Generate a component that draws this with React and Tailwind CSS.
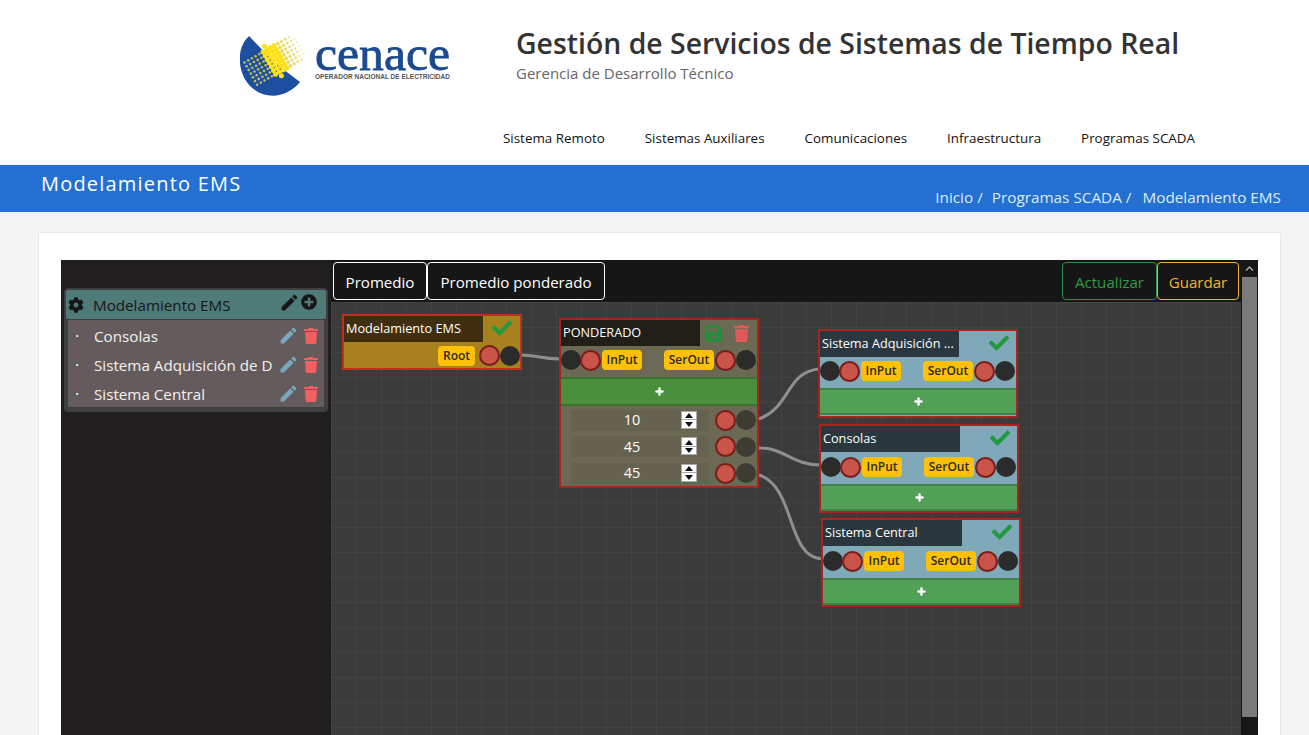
import React from "react";
import { FaCheck, FaChevronUp, FaCog, FaPlus, FaPlusCircle, FaSave, FaTrash } from "react-icons/fa";
import { MdEdit } from "react-icons/md";

const NAV = ["Sistema Remoto", "Sistemas Auxiliares", "Comunicaciones", "Infraestructura", "Programas SCADA"];
const ITEMS = ["Consolas", "Sistema Adquisición de Datos", "Sistema Central"];

const Logo = () => {
  const dots = [];
  for (let u = -6; u < 8; u++) {
    for (let v = -4; v < 5; v++) {
      const x = 33 + u * 3.7 + v * 2.1;
      const y = 27 - u * 2.1 + v * 3.7;
      const edge = Math.abs(v) > 3 - Math.abs(u) * 0.15 + 1;
      if (edge) continue;
      if (u < -1) {
        dots.push(<circle key={`${u}-${v}`} cx={x} cy={y} r={1.3} fill="#c9bf50" />);
      } else if (u < 3) {
        dots.push(<circle key={`${u}-${v}`} cx={x} cy={y} r={2.5} fill="#ffe11a" />);
      } else {
        dots.push(<circle key={`${u}-${v}`} cx={x} cy={y} r={Math.max(0.7, 1.9 - (u - 3) * 0.3)} fill="#ecd95e" />);
      }
    }
  }
  return (
    <svg width="214" height="80" viewBox="0 -12 214 80" className="shrink-0">
      <path d="M9 2 C -4 14, -3 38, 10 52 C 24 66, 46 65, 60 48 L35 29 Z" fill="#1c4f9f" />
      {dots}
      <text x="75" y="36" fontFamily="Liberation Serif, serif" fontWeight="400" fontSize="48" fill="#1c4a8f" stroke="#1c4a8f" strokeWidth="0.8" textLength="135" lengthAdjust="spacingAndGlyphs">cenace</text>
      <text x="75" y="45" fontFamily="Liberation Sans, sans-serif" fontWeight="700" fontSize="7.2" fill="#555" textLength="135" lengthAdjust="spacingAndGlyphs">OPERADOR NACIONAL DE ELECTRICIDAD</text>
    </svg>
  );
};

const Port = ({ red, dark = "bg-[#2b2b2b]", className = "" }) =>
  red ? (
    <span className={`h-[21px] w-[21px] shrink-0 rounded-full border-2 border-[#7a1c18] bg-[#c9544a] ${className}`} />
  ) : (
    <span className={`h-5 w-5 shrink-0 rounded-full ${dark} ${className}`} />
  );

const Badge = ({ children, className = "" }) => (
  <span className={`flex h-5 shrink-0 items-center justify-center rounded-[4px] bg-[#ffc107] text-[12px] font-semibold text-[#2b2b2b] ${className}`}>
    {children}
  </span>
);

const Ports = () => (
  <div className="flex h-[24px] items-center">
    <Port />
    <Port red className="-ml-[1px]" />
    <Badge className="ml-[1px] w-10">InPut</Badge>
    <Badge className="ml-[22px] w-[50px]">SerOut</Badge>
    <Port red className="ml-[1px]" />
    <Port />
  </div>
);

const AddButton = ({ className }) => (
  <div className={`flex items-center justify-center border-y-2 border-black/20 text-white ${className}`}>
    <FaPlus size={9} stroke="currentColor" strokeWidth={40} />
  </div>
);

const Node = ({ x, y, title, rowClass = "mt-[3px]" }) => (
  <div className="absolute h-[89px] w-[200px] border-2 border-[#a9231f] bg-[#7fa8b8]" style={{ left: x, top: y }}>
    <div className="flex h-[26px] items-center justify-between">
      <div className="flex h-full w-[139px] items-center bg-[#2a373e] pl-[2px] text-[12.7px] text-white">{title}</div>
      <FaCheck size={20} className="mb-[3px] mr-[7px] text-[#20993f]" />
    </div>
    <div className={rowClass}><Ports /></div>
    <AddButton className="mt-[5px] h-[27px] bg-[#52a058]" />
  </div>
);

const Spinner = () => (
  <span className="absolute left-[110px] top-[1px] flex h-[18px] w-[16px] flex-col border border-[#aaa] bg-white">
    <span className="flex flex-1 items-center justify-center border-b border-[#aaa]">
      <svg width="8" height="5" viewBox="0 0 8 5"><path d="M4 0 L8 5 L0 5 Z" fill="#111" /></svg>
    </span>
    <span className="flex flex-1 items-center justify-center">
      <svg width="8" height="5" viewBox="0 0 8 5"><path d="M0 0 L8 0 L4 5 Z" fill="#111" /></svg>
    </span>
  </span>
);

const ValueRow = ({ value }) => (
  <div className="flex h-[26.5px] items-center">
    <div className="relative ml-[10px] flex h-[21px] w-[138px] items-center justify-center bg-[#656350] pr-[16px] text-[14.5px] text-white">
      {value}
      <Spinner />
    </div>
    <span className="ml-[6px] flex items-center">
      <Port red />
      <Port dark="bg-[#3d3c33]" />
    </span>
  </div>
);

const SidebarRow = ({ label }) => (
  <div className="flex h-[29px] items-center pl-[7px]">
    <span className="w-[19px] shrink-0 text-white">·</span>
    <span className="w-[179px] shrink-0 overflow-hidden whitespace-nowrap pt-[2px] text-[15.2px] text-[#f4f0ee]">{label}</span>
    <MdEdit size={21} className="ml-[5px] shrink-0 text-[#7ba6c0]" />
    <FaTrash size={16} className="ml-[4px] shrink-0 text-[#f25f5f]" />
  </div>
);

const Wires = () => (
  <svg className="absolute left-0 top-0" width="910" height="433" fill="none" stroke="#8f8f8f" strokeWidth="3">
    <path d="M190 53 C 205 53, 210 57, 229 57" />
    <path d="M428 117 C 460 105, 455 70, 488 67" />
    <path d="M428 146 C 455 146, 460 163, 490 163" />
    <path d="M428 173 C 465 185, 455 255, 491 257" />
  </svg>
);

export default function App() {
  return (
    <div className="flex h-screen flex-col overflow-hidden bg-[#f4f4f4] font-['Open_Sans',sans-serif] text-[#2f2f2f]">
      <header className="h-[165px] shrink-0 bg-white">
        <div className="flex h-[70px] pl-[240px] pt-[26px]">
          <div className="-mt-[4px]"><Logo /></div>
          <div className="ml-[62px]">
            <h1 className="text-[28.4px] font-semibold leading-[34px] text-[#333]">Gestión de Servicios de Sistemas de Tiempo Real</h1>
            <p className="mt-[2px] text-[15px] text-[#666]">Gerencia de Desarrollo Técnico</p>
          </div>
        </div>
        <nav className="mt-[58px] flex justify-end gap-10 pr-[114px] text-[13.4px] font-medium text-[#111]">
          {NAV.map((n) => (
            <a key={n}>{n}</a>
          ))}
        </nav>
      </header>

      <div className="flex h-[47px] shrink-0 justify-between bg-[#2370d2] pl-[41px] pr-[28px] text-white">
        <h2 className="pt-[4px] text-[20px] tracking-[1.2px]">Modelamiento EMS</h2>
        <div className="flex items-end pb-[3px] text-[15.3px] text-[#dcecfb]">
          <span>Inicio /</span>
          <span className="ml-[9px]">Programas SCADA /</span>
          <span className="ml-[11px]">Modelamiento EMS</span>
        </div>
      </div>

      <main className="px-[38px] pt-[20px]">
        <div className="h-[600px] w-[1243px] rounded-[2px] border border-[#e8e8e8] bg-white px-[22px] pt-[27px]">
          <div className="relative flex h-[560px] w-[1197px]">
            <aside className="h-full w-[270px] shrink-0 bg-[#1f1d1e] pl-[3px] pt-[28px]">
              <div className="h-[124px] w-[264px] rounded-[4px] bg-[#3f3f3f] p-[2px]">
                <div className="flex h-[29px] items-center rounded-[2px] bg-[#4f7b79] pl-[2px] pr-[9px] text-[#161616]">
                  <FaCog size={16} />
                  <span className="ml-[9px] pt-[2px] text-[15.2px]">Modelamiento EMS</span>
                  <MdEdit size={21} className="mb-[5px] ml-auto" />
                  <FaPlusCircle size={16} className="mb-[5px] ml-[1px]" />
                </div>
                <div className="ml-[2px] mt-[1px] h-[87px] w-[256px] bg-[#645c5c] pt-[1px]">
                  {ITEMS.map((i) => (
                    <SidebarRow key={i} label={i} />
                  ))}
                </div>
              </div>
            </aside>

            <div className="flex min-w-0 flex-1 flex-col">
              <div className="flex h-[42px] shrink-0 items-start bg-[#161616] pl-[2px] pt-[2px] text-[15.1px]">
                <button className="h-[38px] w-[94px] rounded-[4px] border border-white pt-[2px] text-white">Promedio</button>
                <button className="h-[38px] w-[178px] rounded-[4px] border border-white pt-[2px] text-white">Promedio ponderado</button>
                <button className="ml-auto h-[38px] w-[95px] rounded-[4px] border border-[#2f8f45] pt-[2px] text-[#2f9a48]">Actualizar</button>
                <button className="mr-[19px] h-[38px] w-[82px] rounded-[4px] border border-[#f0b429] pt-[2px] text-[#f0b429]">Guardar</button>
              </div>
              <div className="relative flex-1 overflow-hidden bg-[#3b3b3b] bg-[linear-gradient(rgba(255,255,255,0.04)_1px,transparent_1px),linear-gradient(90deg,rgba(255,255,255,0.04)_1px,transparent_1px)] bg-[size:25px_25px]">
                <Wires />

                <div className="absolute left-[11px] top-[12px] h-[56px] w-[180px] border-2 border-[#c0301c] bg-[#a8811f]">
                  <div className="flex h-[26px] items-center justify-between">
                    <div className="flex h-full w-[139px] items-center bg-[#3f2f10] pl-[2px] text-[12.7px] text-white">Modelamiento EMS</div>
                    <FaCheck size={20} className="mb-[2px] mr-[8px] text-[#20993f]" />
                  </div>
                  <div className="mt-[3px] flex items-center justify-end">
                    <Badge className="mr-[4px] w-[37px]">Root</Badge>
                    <Port red />
                    <Port />
                  </div>
                </div>

                <div className="absolute left-[228px] top-[16px] h-[170px] w-[200px] border-2 border-[#a9231f] bg-[#6b6853]">
                  <div className="flex h-[26px] items-center">
                    <div className="flex h-full w-[139px] items-center bg-[#221e18] pl-[2px] text-[12.7px] text-white">PONDERADO</div>
                    <FaSave size={19} className="ml-[4px] text-[#1f8f3a]" />
                    <FaTrash size={17} className="ml-[10px] text-[#e05a5a]" />
                  </div>
                  <div className="mt-[2px]"><Ports /></div>
                  <AddButton className="mt-[5px] h-[29px] bg-[#4a8f3c]" />
                  <div className="mt-[1px]">
                    <ValueRow value="10" />
                    <ValueRow value="45" />
                    <ValueRow value="45" />
                  </div>
                </div>

                <Node x={487} y={27} title="Sistema Adquisición ..." rowClass="mt-[2px]" />
                <Node x={488} y={122} title="Consolas" />
                <Node x={490} y={216} title="Sistema Central" />
              </div>
            </div>

            <div className="absolute right-0 top-0 h-full w-[17px] bg-[#171717]">
              <div className="flex h-[17px] items-center justify-center text-[#aaa]">
                <FaChevronUp size={9} />
              </div>
              <div className="mx-auto h-[440px] w-[15px] bg-[#7a7a7a]" />
            </div>
          </div>
        </div>
      </main>
    </div>
  );
}
